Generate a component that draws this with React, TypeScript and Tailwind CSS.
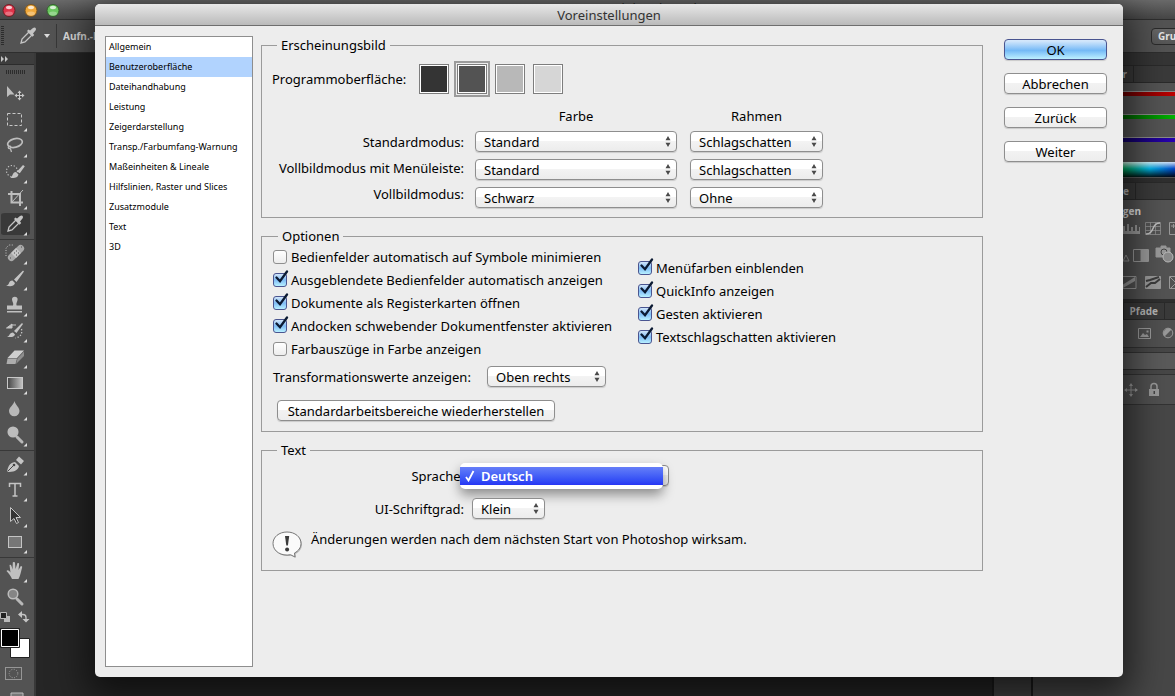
import { ReactNode, useState } from 'react';

type Tool = { name: string; icon: ReactNode; plain?: boolean };

const pipette = (
  <>
    <path d="M5 19l1-4 7-7 3 3-7 7z" fill="none" stroke="#c4c4c4" strokeWidth="1.3" />
    <path d="M11 7l1.5-1.5 1.5 1L17 4c2-1.500 4 .5 2.500 2.500L17 9.500l1.200 1.500-1.700 1.700z" fill="#c4c4c4" />
  </>
);

const magnifier = (fill: string) => (
  <>
    <path d="M14 14l5 5" stroke="#b8b8b8" strokeWidth="3" strokeLinecap="round" />
    <circle cx="10" cy="9" r="4.800" fill={fill} stroke="#bdbdbd" strokeWidth="1.500" />
  </>
);

const toolGroups: Tool[][] = [
  [
    {
      name: 'Verschieben',
      plain: true,
      icon: (
        <>
          <path d="M4 4v11l3-2.500h4.500z" fill="#bdbdbd" />
          <path d="M16.500 9v9M12 13.500h9" stroke="#c8c8c8" strokeWidth="1" />
          <path d="M14.500 11l2-2.500 2 2.500zM14.500 16l2 2.500 2-2.500zM14 11.500l-2.500 2 2.500 2zM19 11.500l2.500 2-2.500 2z" fill="#c8c8c8" />
        </>
      ),
    },
    {
      name: 'Auswahlrechteck',
      icon: <rect x="4.500" y="5.500" width="14" height="12" fill="none" stroke="#c8c8c8" strokeDasharray="3 2" />,
    },
    {
      name: 'Lasso',
      icon: (
        <>
          <ellipse cx="12" cy="9" rx="7.500" ry="4.300" transform="rotate(-14 12 9)" fill="none" stroke="#bdbdbd" strokeWidth="1.700" />
          <path d="M6 12c-1.500 1.500-.5 3 1 2.500s1-2.500-.5-2.500M7.500 15l1 3" fill="none" stroke="#bdbdbd" strokeWidth="1.300" />
        </>
      ),
    },
    {
      name: 'Schnellauswahl',
      icon: (
        <>
          <circle cx="9" cy="11" r="5.500" fill="none" stroke="#c4c4c4" strokeWidth="1.200" strokeDasharray="1.200 1.800" />
          <path d="M7 17.500c3 0 2-5.500 6-5.500l2.500 2.500c-1 4-5.500 4-8.500 3zM14 11.500l6-6.500 1.800 1.200-5 7z" fill="#c4c4c4" />
        </>
      ),
    },
    {
      name: 'Freistellen',
      icon: (
        <>
          <path d="M5 8h12v12M8.500 5v11.500H20" fill="none" stroke="#bdbdbd" strokeWidth="2" />
          <path d="M9 16L20 4" stroke="#bdbdbd" strokeWidth="1" />
        </>
      ),
    },
    { name: 'Pipette', icon: pipette },
  ],
  [
    {
      name: 'Bereichsreparatur',
      icon: (
        <>
          <path d="M3 15V7l3-3h5" fill="none" stroke="#c4c4c4" strokeDasharray="1 1.500" />
          <rect x="3" y="8.500" width="20" height="7" rx="3.500" transform="rotate(-45 13 12)" fill="#aaaaaa" />
          <rect x="9.500" y="8.500" width="7" height="7" transform="rotate(-45 13 12)" fill="#c8c8c8" />
          <path d="M11 12h1M13 10h1M13 14h1M15 12h1M18 6h1M7 17h1" stroke="#4c4c4c" />
        </>
      ),
    },
    {
      name: 'Pinsel',
      icon: <path d="M3 18.500c4 0 2-5 6.500-5l2.500 2.500c-1 4-6 3.500-9 2.500zM11 12.500l9-9 1 1-7.500 10.500z" fill="#c4c4c4" />,
    },
    {
      name: 'Kopierstempel',
      icon: <path d="M4 19.500V18h15v1.500zM4 16.500v-4h6c1-2-1-4-1-6a2.800 2.800 0 0 1 5.600 0c0 2-2 4-1 6H19v4z" fill="#c0c0c0" />,
    },
    {
      name: 'Protokollpinsel',
      icon: (
        <>
          <path d="M4 17.500c3 0 2-4 6-4l2 2c-1 3-5 3-8 2zM11 12l8-8 1 1-6.500 9z" fill="#c4c4c4" />
          <path d="M8 6h5M3.500 9L9 5v4z" stroke="#c4c4c4" strokeWidth="1" fill="#c4c4c4" />
          <path d="M18.500 10c1 5-1 8-6 9" fill="none" stroke="#c4c4c4" strokeWidth="1.300" strokeDasharray="1.300 1.700" />
        </>
      ),
    },
    {
      name: 'Radiergummi',
      icon: (
        <>
          <path d="M4.500 13l7-7.500H21L14 13z" fill="#cfcfcf" />
          <path d="M4.500 13.500H14l-1.500 5.500h-9z" fill="#adadad" />
          <path d="M14.500 13.500L21 6.500V11l-8 8z" fill="#8d8d8d" />
        </>
      ),
    },
    {
      name: 'Verlauf',
      icon: (
        <>
          <defs>
            <linearGradient id="verlauf">
              <stop offset="0" stopColor="#444" />
              <stop offset="1" stopColor="#c4c4c4" />
            </linearGradient>
          </defs>
          <rect x="4.500" y="6.500" width="15" height="11" fill="url(#verlauf)" stroke="#c8c8c8" />
        </>
      ),
    },
    {
      name: 'Weichzeichner',
      icon: <path d="M11.500 4c1 4 5 6.500 5 10a5 5 0 0 1-10.500 0c0-3.500 4.500-6 5.500-10z" fill="#b8b8b8" />,
    },
    { name: 'Abwedler', icon: magnifier('#bdbdbd') },
  ],
  [
    {
      name: 'Zeichenstift',
      icon: (
        <>
          <path d="M4 20c1-5 2-9 8-10l4 4c-1 5-6 6-12 6zM13 8l3-3.500L21 9l-3 3.500z" fill="#c4c4c4" />
          <path d="M4.500 19.500l6-6" stroke="#444" />
          <circle cx="11" cy="13" r="1.300" fill="#444" />
        </>
      ),
    },
    {
      name: 'Text',
      icon: (
        <path d="M6.500 9V5.500h11V9M12 5.500V18M9.500 18h5" fill="none" stroke="#c4c4c4" strokeWidth="1.500" />
      ),
    },
    {
      name: 'Pfadauswahl',
      icon: <path d="M7.500 3.500v14l3.500-3 2.500 5 2-1-2.500-5h4.500z" fill="#333" stroke="#c4c4c4" />,
    },
    { name: 'Rechteck', icon: <rect x="5.500" y="6.500" width="13" height="11" fill="#777" stroke="#c4c4c4" /> },
  ],
  [
    {
      name: 'Hand',
      icon: (
        <path
          d="M9 20c-1-3-3-5-5.500-8 1-1.500 2.500-.5 4 1.500L6.500 6c1.500-1 2 0 3 4.500l.3-7c1.400-.8 2-.3 2.200.3l.5 6.200L14.500 4c1.300-.4 1.700.3 1.600 1.300L15.500 11l2.300-4c1.400 0 1.500.8 1.300 1.600-1 3.500-1.600 8-3.600 11.400z"
          fill="#c0c0c0"
        />
      ),
    },
    { name: 'Zoom', plain: true, icon: magnifier('#858585') },
  ],
];

const categories = [
  'Allgemein',
  'Benutzeroberfläche',
  'Dateihandhabung',
  'Leistung',
  'Zeigerdarstellung',
  'Transp./Farbumfang-Warnung',
  'Maßeinheiten & Lineale',
  'Hilfslinien, Raster und Slices',
  'Zusatzmodule',
  'Text',
  '3D',
];

const themes = [
  { name: 'Schwarz', color: 'bg-[#343434]' },
  { name: 'Dunkelgrau', color: 'bg-[#535353]' },
  { name: 'Mittelgrau', color: 'bg-[#b8b8b8]' },
  { name: 'Hellgrau', color: 'bg-[#d6d6d6]' },
];

const screenModes = [
  { id: 'standard', label: 'Standardmodus:', color: 'Standard', frame: 'Schlagschatten' },
  { id: 'menubar', label: 'Vollbildmodus mit Menüleiste:', color: 'Standard', frame: 'Schlagschatten' },
  { id: 'full', label: 'Vollbildmodus:', color: 'Schwarz', frame: 'Ohne' },
];

const optionsLeft = [
  { label: 'Bedienfelder automatisch auf Symbole minimieren', on: false },
  { label: 'Ausgeblendete Bedienfelder automatisch anzeigen', on: true },
  { label: 'Dokumente als Registerkarten öffnen', on: true },
  { label: 'Andocken schwebender Dokumentfenster aktivieren', on: true },
  { label: 'Farbauszüge in Farbe anzeigen', on: false },
];

const optionsRight = [
  { label: 'Menüfarben einblenden', on: true },
  { label: 'QuickInfo anzeigen', on: true },
  { label: 'Gesten aktivieren', on: true },
  { label: 'Textschlagschatten aktivieren', on: true },
];

function Select({ id, label, options, className }: { id: string; label?: string; options: string[]; className: string }) {
  return (
    <div className={`relative ${className}`}>
      <select
        id={id}
        aria-label={label}
        className="block h-[21px] w-full appearance-none rounded border border-[#8e8e8e] bg-linear-to-b from-white from-45% via-[#f3f3f3] via-50% to-[#ececec] pl-2 pr-5 text-[13px] leading-[18px] text-black shadow-[0_1px_1px_rgba(0,0,0,0.15)]"
      >
        {options.map((o) => (
          <option key={o}>{o}</option>
        ))}
      </select>
      <svg className="pointer-events-none absolute right-1.5 top-[5px]" width="6" height="11" viewBox="0 0 6 11" fill="#4a4a4a">
        <path d="M3 0l2.500 4.200h-5zM3 11L.5 6.800h5z" />
      </svg>
    </div>
  );
}

function Check({ label, on }: { label: string; on: boolean }) {
  return (
    <label className="flex h-[23px] items-center gap-1 whitespace-nowrap">
      <span className="relative block h-3.5 w-3.5">
        <input
          type="checkbox"
          defaultChecked={on}
          className="peer block h-3.5 w-3.5 appearance-none rounded-[3px] border border-[#8e8e8e] bg-linear-to-b from-white to-[#ededed] checked:border-[#4a5590] checked:from-[#d2e6fa] checked:via-[#7fbcf5] checked:to-[#b8f0ff]"
        />
        <svg className="pointer-events-none absolute -top-[3px] left-0 hidden peer-checked:block" width="16" height="16" viewBox="0 0 16 16">
          <path d="M3.500 7.500l3.500 3.700L14 1.500" fill="none" stroke="#0b1a33" strokeWidth="2.300" strokeLinecap="round" />
        </svg>
      </span>
      {label}
    </label>
  );
}

function Group({ title, className, children }: { title: string; className: string; children: ReactNode }) {
  return (
    <fieldset className={`min-w-0 border border-[#9b9b9b] ${className}`}>
      <legend className="ml-[5px] px-1 leading-[18px]">{title}</legend>
      {children}
    </fieldset>
  );
}

function ToolButton({ tool, active }: { tool: Tool; active: boolean }) {
  return (
    <button
      type="button"
      aria-label={tool.name}
      className={`flex h-[26px] w-full items-center pl-0.5 ${active ? 'rounded-sm border-y-2 border-[#535353] bg-[#393939]' : ''}`}
    >
      <svg width="24" height="24" viewBox="0 0 24 24" className="shrink-0">
        {tool.icon}
        {!tool.plain && <path d="M24 20v3.500h-3.500z" fill="#dedede" />}
      </svg>
    </button>
  );
}

function Toolbar() {
  return (
    <div className="flex w-9 shrink-0 flex-col overflow-hidden border-r-2 border-[#393939] bg-[#535353]">
      <div className="flex h-3 shrink-0 items-center border-b border-[#2c2c2c] bg-[#3d3d3d]">
        <svg width="8" height="6" viewBox="0 0 8 6" fill="#c4c4c4">
          <path d="M1 0l3 3-3 3zM5 0l3 3-3 3z" />
        </svg>
      </div>
      <div className="mx-1.5 mb-[7px] mt-[5px] h-1 w-5 shrink-0 bg-[repeating-linear-gradient(90deg,#2c2c2c_0_1px,#535353_1px_2px)]" />
      {toolGroups.map((group, i) => (
        <div key={i} className={`pl-px pr-1 ${i > 0 ? 'mt-0.5 border-t border-[#383838]' : ''}`}>
          {group.map((t) => (
            <ToolButton key={t.name} tool={t} active={t.name === 'Pipette'} />
          ))}
        </div>
      ))}
      <svg width="34" height="90" viewBox="0 0 34 90" className="shrink-0">
        <path d="M4 6h6v6H4z" fill="#b8b8b8" />
        <path d="M.5 2.500h6v6h-6z" fill="#222" stroke="#b8b8b8" />
        <path d="M20 4.500h3c2 0 3 1 3 3V10" fill="none" stroke="#c4c4c4" strokeWidth="1.300" />
        <path d="M18 4.500l4-3.500v7zM22.500 9h7L26 12.500z" fill="#c4c4c4" />
        <path d="M10.500 28.500h19v19h-19z" fill="#fff" stroke="#222" />
        <path d="M1.500 19.500h17v17h-17z" fill="#000" stroke="#fff" />
        <path d="M.5 18.500h19v19H.5z" fill="none" stroke="#222" />
        <rect x="5.500" y="57.500" width="16" height="12" fill="none" stroke="#969696" />
        <circle cx="13.500" cy="63.500" r="4.300" fill="none" stroke="#a6a6a6" strokeDasharray="1 1.500" />
        <path d="M11 83h12v7H11z" fill="#777" stroke="#bdbdbd" />
      </svg>
    </div>
  );
}

function TabRow({ tabs, rest }: { tabs: string[]; rest: string }) {
  return (
    <div className="flex h-[18px] shrink-0 justify-end border-y border-[#2a2a2a] bg-[#3a3a3a] text-[10px] font-bold leading-4 text-[#b4b4b4]">
      {tabs.map((t) => (
        <span key={t} className="shrink-0 border-r border-[#2a2a2a] px-1.5">
          {t}
        </span>
      ))}
      <span className={`shrink-0 ${rest}`} />
    </div>
  );
}

function Panels() {
  return (
    <div className="flex w-[142px] shrink-0 flex-col overflow-hidden bg-[#474747]">
      <div className="h-3 shrink-0 bg-[#353535]" />
      <TabRow tabs={['Farbe', 'Farbregler']} rest="w-[41px]" />
      <div className="flex shrink-0 flex-col bg-[#535353] pb-px pt-2">
        <div className="h-[5px] border-t border-[#8a8a8a] bg-linear-to-r from-black to-[#c00000]" />
        <div className="mt-[18px] h-[5px] border-t border-[#8a8a8a] bg-linear-to-r from-black to-[#00b400]" />
        <div className="mt-[18px] h-[5px] border-t border-[#8a8a8a] bg-linear-to-r from-black to-[#2800b4]" />
        <div className="mt-5 h-[15px] bg-[linear-gradient(180deg,#ffffffd0,#ffffff00_45%,#000000e0),linear-gradient(90deg,#f00,#ff0,#0a4_60%,#00b4e6_82%,#0040c0)]" />
      </div>
      <div className="h-1 shrink-0 bg-[#2f2f2f]" />
      <TabRow tabs={['Korrekturen', 'Stile']} rest="w-[39px]" />
      <div className="flex h-[99px] shrink-0 flex-col items-end bg-[#535353]">
        <p className="mr-[34px] mt-[3px] whitespace-nowrap text-[10px] font-bold leading-4 text-[#e4e4e4]">Korrekturen hinzufügen</p>
        <svg width="52" height="76" viewBox="-2 0 52 76" fill="none" stroke="#999">
          <path d="M-4 14v-4h2V7h2v5h2V5h2v7h2V8h2v4h2V6h2v6h2V8h1v7h-17z" fill="#999" stroke="none" />
          <path d="M20.500 3.500h15v12h-15zM25.500 3.500v12M30.500 3.500v12M20.500 7.500h15M20.500 11.500h15" strokeWidth=".7" />
          <path d="M21 15c9 0 5-11 14-11" stroke="#c0c0c0" strokeWidth="1.500" />
          <path d="M44.500 3.500h10v12h-10zM46 7h5M48.500 5v4" />
          <path d="M8.500 30.500h15v12h-15z" />
          <path d="M16 31h7v11h-7z" fill="#999" />
          <path d="M-2 42l3-6 3 6z" />
          <path d="M31 29h5v-2h5v2h4v9H31z" fill="#999" />
          <circle cx="39" cy="33" r="3" stroke="#444" />
          <circle cx="43" cy="38" r="5" fill="#8a8a8a" stroke="#bbb" />
          <path d="M-4 57.500h15v12H-4z" />
          <path d="M-3 66l13-8v4l-12 7z" fill="#999" stroke="none" />
          <path d="M20.500 57.500h15v12h-15z" fill="#999" />
          <path d="M21 68l5-4h4l5-4M21 62l4-1 9-3" stroke="#3c3c3c" strokeWidth="2" />
          <path d="M44.500 57.500h10v12h-10zM45 58l6 6-6 6" />
        </svg>
      </div>
      <div className="h-[3px] shrink-0 bg-[#2f2f2f]" />
      <TabRow tabs={['Ebenen', 'Kanäle', 'Pfade']} rest="w-[10px]" />
      <div className="flex h-7 shrink-0 items-center justify-end border-b border-[#333] bg-[#505050]">
        <svg width="38" height="14" viewBox="0 0 38 14">
          <path d="M1.500 1.500h12v10h-12z" fill="none" stroke="#999" />
          <path d="M3 10l3-4 2 2 2-1 2 3zM9.500 3.500h2v2h-2z" fill="#999" />
          <circle cx="31" cy="6" r="4.800" fill="#555" stroke="#999" />
          <path d="M27.500 9.500a5 5 0 0 1 7-7z" fill="#999" />
        </svg>
      </div>
      <div className="mt-1 h-[18px] shrink-0 border-y border-b-[#2f2f2f] border-t-[#333] bg-[#5a5a5a]" />
      <div className="mt-1 flex h-[31px] shrink-0 items-center justify-end border-y border-[#333] bg-[#505050]">
        <svg width="52" height="16" viewBox="0 0 52 16" fill="#999">
          <path d="M8 2v12M2 8h12" stroke="#999" />
          <path d="M6 4l2-3 2 3zM6 12l2 3 2-3zM4 6L1 8l3 2zM12 6l3 2-3 2z" />
          <path d="M26 7h10v7H26z" />
          <path d="M28 7V4.500a3 3 0 0 1 6 0V7" fill="none" stroke="#999" strokeWidth="1.500" />
          <path d="M30.500 9h1.500v3h-1.500z" fill="#444" />
        </svg>
      </div>
    </div>
  );
}

function Workspace() {
  return (
    <div className="flex h-full flex-col font-['Open_Sans',sans-serif]">
      <div className="flex h-5 shrink-0 items-center overflow-hidden border-b border-[#2e2e2e] bg-linear-to-b from-[#6a6a6a] to-[#464646]">
        <svg width="60" height="18" viewBox="0 0 60 18">
          <circle cx="9" cy="9.500" r="6" fill="#e0344a" stroke="#6b2026" />
          <circle cx="31" cy="9.500" r="6" fill="#f0a83a" stroke="#7a5420" />
          <circle cx="53" cy="9.500" r="6" fill="#6cc860" stroke="#34602e" />
          <g fill="#fff" fillOpacity=".75">
            <ellipse cx="9" cy="6.500" rx="3" ry="1.700" />
            <ellipse cx="31" cy="6.500" rx="3" ry="1.700" />
            <ellipse cx="53" cy="6.500" rx="3" ry="1.700" />
          </g>
          <g fill="#fff" fillOpacity=".3">
            <ellipse cx="9" cy="12.500" rx="4" ry="2" />
            <ellipse cx="31" cy="12.500" rx="4" ry="2" />
            <ellipse cx="53" cy="12.500" rx="4" ry="2" />
          </g>
        </svg>
        <h1 className="flex-1 pb-1 pl-[117px] text-center text-[13px] leading-4 text-[#1e1e1e]">Adobe Photoshop CS6</h1>
      </div>
      <div className="flex h-[33px] shrink-0 items-center justify-between border-b border-[#2e2e2e] bg-[#535353]">
        <div className="flex items-center">
          <div className="ml-px h-5 w-[3px] bg-[repeating-linear-gradient(180deg,#2c2c2c_0_1px,#535353_1px_2px)]" />
          <svg className="ml-3" width="24" height="24" viewBox="0 0 24 24">
            {pipette}
          </svg>
          <svg className="ml-1" width="6" height="4" viewBox="0 0 6 4">
            <path d="M0 0h6L3 4z" fill="#dcdcdc" />
          </svg>
          <div className="ml-1.5 h-6 w-px bg-[#383838]" />
          <span className="ml-1.5 text-[10px] font-bold text-[#dedede]">Aufn.-Bereich:</span>
        </div>
        <div className="w-6 overflow-hidden">
          <button
            type="button"
            className="block h-[17px] rounded-sm border border-[#2a2a2a] bg-linear-to-b from-[#666] to-[#555] px-1.5 text-[10px] font-bold leading-[15px] text-[#e4e4e4]"
          >
            Grundelemente
          </button>
        </div>
      </div>
      <div className="flex min-h-0 flex-1">
        <Toolbar />
        <div className="flex-1 bg-[#262626]" />
        <div className="w-[41px] shrink-0 border-x-2 border-[#1c1c1c] bg-[#424242]" />
        <Panels />
      </div>
    </div>
  );
}

const pushButton =
  'h-[21px] rounded border text-[13px] leading-[18px] text-black shadow-[0_1px_1px_rgba(0,0,0,0.15)]';
const grayButton = 'border-[#8e8e8e] bg-linear-to-b from-white from-45% via-[#f2f2f2] via-50% to-[#ededed]';

function Preferences() {
  const [theme, setTheme] = useState('Dunkelgrau');

  return (
    <div
      role="dialog"
      aria-labelledby="dialog-title"
      className="absolute bottom-[19px] left-[95px] right-[52px] top-1 flex flex-col overflow-hidden rounded-[5px] bg-[#ededed] font-['Noto_Sans',sans-serif] text-[13px] leading-[18px] text-black shadow-[0_12px_36px_8px_rgba(0,0,0,0.6)]"
    >
      <h2
        id="dialog-title"
        className="h-[22px] shrink-0 border-b border-[#6e6e6e] bg-linear-to-b from-[#e8e8e8] to-[#bababa] text-center leading-[22px] text-[#333]"
      >
        Voreinstellungen
      </h2>
      <div className="flex flex-1 gap-2 pb-2.5 pl-2.5 pr-4 pt-2.5">
        <ul className="w-[148px] shrink-0 border border-[#8e8e8e] bg-white text-[9px] leading-5">
          {categories.map((c) => (
            <li key={c} className={`h-5 whitespace-nowrap px-[3px] ${c === 'Benutzeroberfläche' ? 'bg-[#b1d3fe]' : ''}`}>
              {c}
            </li>
          ))}
        </ul>

        <div className="flex flex-1 flex-col gap-[9px]">
          <Group title="Erscheinungsbild" className="pb-[9px] pl-2.5">
            <div className="mt-2.5 flex h-[30px] items-center gap-2">
              <span className="w-[139px]">Programmoberfläche:</span>
              {themes.map((t) => (
                <input
                  key={t.name}
                  type="radio"
                  name="theme"
                  aria-label={t.name}
                  checked={theme === t.name}
                  onChange={() => setTheme(t.name)}
                  className={`h-[30px] w-[30px] appearance-none border border-[#7d7d7d] shadow-[inset_0_0_0_1px_#fff] checked:shadow-[inset_0_0_0_1px_#fff,0_0_0_1px_#ededed,0_0_0_3px_#9b9b9b] ${t.color}`}
                />
              ))}
            </div>
            <div className="mt-[13px] flex">
              <div className="mr-[11px] mt-[22px] flex w-[192px] flex-col items-end">
                {screenModes.map((m) => (
                  <label key={m.id} htmlFor={`${m.id}-color`} className="whitespace-nowrap leading-[26px]">
                    {m.label}
                  </label>
                ))}
              </div>
              <div className="mr-[13px] flex w-[202px] flex-col gap-[7px]">
                <span className="h-[17px] text-center">Farbe</span>
                {screenModes.map((m) => (
                  <Select key={m.id} id={`${m.id}-color`} options={[m.color]} className="w-full" />
                ))}
              </div>
              <div className="flex w-[133px] flex-col gap-[7px]">
                <span className="h-[17px] text-center">Rahmen</span>
                {screenModes.map((m) => (
                  <Select key={m.id} id={`${m.id}-frame`} label={`Rahmen ${m.label}`} options={[m.frame]} className="w-full" />
                ))}
              </div>
            </div>
          </Group>

          <Group title="Optionen" className="pb-2.5 pl-[11px]">
            <div className="flex">
              <div className="w-[365px]">
                {optionsLeft.map((o) => (
                  <Check key={o.label} {...o} />
                ))}
              </div>
              <div className="mt-[11px]">
                {optionsRight.map((o) => (
                  <Check key={o.label} {...o} />
                ))}
              </div>
            </div>
            <div className="mt-1.5 flex items-center">
              <label htmlFor="transform" className="w-[214px]">
                Transformationswerte anzeigen:
              </label>
              <Select id="transform" options={['Oben rechts']} className="w-[119px]" />
            </div>
            <button type="button" className={`ml-1 mt-[13px] w-[278px] whitespace-nowrap ${pushButton} ${grayButton}`}>
              Standardarbeitsbereiche wiederherstellen
            </button>
          </Group>

          <Group title="Text" className="pb-2.5 pl-2.5">
            <div className="mt-1.5 flex items-center gap-2">
              <label htmlFor="language" className="w-[192px] text-right">
                Sprache:
              </label>
              <div className="relative">
                <Select id="language" options={['Deutsch']} className="w-[197px]" />
                <ul
                  role="listbox"
                  aria-label="Sprache"
                  className="absolute -left-3 -top-0.5 w-[203px] rounded-[5px] bg-white py-1 shadow-[0_6px_12px_rgba(0,0,0,0.4)]"
                >
                  <li
                    role="option"
                    aria-selected="true"
                    className="flex items-center gap-1.5 bg-linear-to-b from-[#667ef8] to-[#2735f4] pl-[5px] text-[13px] font-semibold leading-[18px] text-white"
                  >
                    <svg width="10" height="12" viewBox="0 0 10 12">
                      <path d="M1 7l2.500 3.500L8.500 1" fill="none" stroke="#fff" strokeWidth="1.800" />
                    </svg>
                    Deutsch
                  </li>
                </ul>
              </div>
            </div>
            <div className="mt-3 flex items-center gap-2">
              <label htmlFor="fontsize" className="w-[192px] text-right">
                UI-Schriftgrad:
              </label>
              <Select id="fontsize" options={['Klein']} className="w-[73px]" />
            </div>
            <div className="mt-[11px] flex gap-[7px]">
              <svg width="32" height="30" viewBox="0 0 32 30">
                <path
                  d="M15 2c8 0 14 5 14 11.500 0 4-2.500 7.500-6.500 9.500l.5 4-4.500-2.300c-9 1.800-17.500-3.200-17.500-11.200C1 7 7 2 15 2z"
                  transform="translate(1 1)"
                  fill="#bbb"
                />
                <path
                  d="M15 2c8 0 14 5 14 11.500 0 4-2.500 7.500-6.500 9.500l.5 4-4.500-2.300c-9 1.800-17.500-3.200-17.500-11.200C1 7 7 2 15 2z"
                  fill="#fafafa"
                  stroke="#777"
                />
                <path d="M13 6h4.200l-1.300 9.500h-1.600z" fill="#3a3a3a" />
                <circle cx="15.100" cy="19.500" r="2" fill="#3a3a3a" />
              </svg>
              <p>Änderungen werden nach dem nächsten Start von Photoshop wirksam.</p>
            </div>
          </Group>
        </div>

        <div className="ml-[13px] mt-[3px] flex w-[103px] shrink-0 flex-col gap-[13px]">
          <button
            type="button"
            className={`${pushButton} border-[#4a5590] bg-linear-to-b from-[#d3e7fb] from-5% via-[#74b9f6] via-55% to-[#bdf0ff]`}
          >
            OK
          </button>
          <button type="button" className={`${pushButton} ${grayButton}`}>Abbrechen</button>
          <button type="button" className={`${pushButton} ${grayButton}`}>Zurück</button>
          <button type="button" className={`${pushButton} ${grayButton}`}>Weiter</button>
        </div>
      </div>
    </div>
  );
}

export default function App() {
  return (
    <div className="relative h-screen min-h-[640px] overflow-hidden bg-[#262626]">
      <Workspace />
      <Preferences />
    </div>
  );
}
